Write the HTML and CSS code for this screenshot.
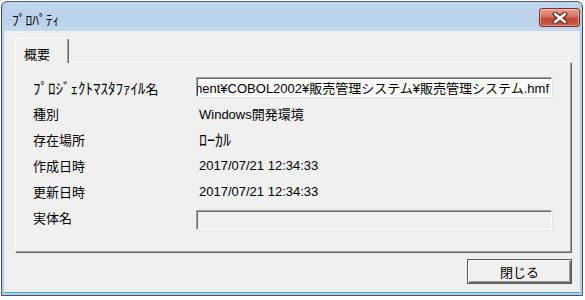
FILE: index.html
```html
<!DOCTYPE html>
<html lang="ja">
<head>
  <meta charset="UTF-8" />
  <title>ﾌﾟﾛﾊﾟﾃｨ</title>
  <link rel="stylesheet" href="styles.css">
</head>
<body>
  <div class="window">
    <div class="titlebar">
      <span class="title">ﾌﾟﾛﾊﾟﾃｨ</span>
      <button class="close-btn">
        <svg width="16" height="12" viewBox="0 0 16 12">
          <path d="M3 2 L13 10 M13 2 L3 10" stroke="#7a2418" stroke-width="5" stroke-linecap="round" />
          <path d="M3 2 L13 10 M13 2 L3 10" stroke="#ffffff" stroke-width="2.6" stroke-linecap="round" />
        </svg>
      </button>
    </div>

    <div class="client">
      <div class="tabs">
        <div class="tab active">概要</div>
      </div>

      <div class="tab-panel">
        <div class="props">
          <div class="label"><span class="kana">ﾌﾟﾛｼﾞｪｸﾄﾏｽﾀﾌｧｲﾙ</span>名</div>
          <div class="textbox"><span>ment¥COBOL2002¥販売管理システム¥販売管理システム.hmf</span></div>

          <div class="label">種別</div>
          <div class="value">Windows開発環境</div>

          <div class="label">存在場所</div>
          <div class="value"><span class="kana wide">ﾛｰｶﾙ</span></div>

          <div class="label">作成日時</div>
          <div class="value">2017/07/21 12:34:33</div>

          <div class="label">更新日時</div>
          <div class="value">2017/07/21 12:34:33</div>

          <div class="label">実体名</div>
          <div class="textbox disabled"></div>
        </div>
      </div>

      <div class="actions">
        <button class="btn">閉じる</button>
      </div>
    </div>
  </div>
</body>
</html>
```

FILE: styles.css
```css
* { box-sizing: border-box; }

body {
  margin: 0;
  background: #ffffff;
  font-family: "Liberation Sans", "Noto Sans CJK JP", sans-serif;
  font-size: 13px;
  color: #000;
}

.window {
  margin: 1px 0 0 1px;
  width: 582px;
  height: 295px;
  border: 1px solid #4f5660;
  border-radius: 6px 6px 0 0;
  background: #b4cfeb;
  display: flex;
  flex-direction: column;
  padding: 0 2px 2px 2px;
}

.titlebar {
  height: 29px;
  flex: none;
  display: flex;
  align-items: flex-start;
  justify-content: space-between;
  padding: 0 0 0 8px;
  background: linear-gradient(#c2d7ee, #b9d1ea 60%, #c4d9ee);
  border-radius: 5px 5px 0 0;
}

.title {
  margin-top: 7px;
  font-size: 13.5px;
}

.close-btn {
  margin-top: 6px;
  width: 41px;
  height: 19px;
  padding: 0;
  border: 1px solid #7d2a20;
  border-radius: 3px;
  background: linear-gradient(#e6a293, #d3705f 45%, #c24a36 55%, #c75a42);
  box-shadow: inset 0 0 0 1px rgba(255, 220, 210, 0.5);
  display: flex;
  align-items: center;
  justify-content: center;
}

.client {
  flex: 1;
  background: #f0f0f0;
  border-bottom: 1px solid #4aa8dc;
  padding: 7px 8px 8px 11px;
  display: flex;
  flex-direction: column;
}

.tabs {
  display: flex;
}

.tab {
  width: 54px;
  height: 25px;
  margin-bottom: -1px;
  position: relative;
  padding: 5px 0 0 8px;
  font-size: 13px;
  background: #f0f0f0;
  border-top: 1px solid #ffffff;
  border-left: 1px solid #ffffff;
  border-right: 1px solid #696969;
  border-radius: 2px 2px 0 0;
  box-shadow: inset -1px 0 #a0a0a0;
}

.tab-panel {
  height: 191px;
  border-top: 1px solid #ffffff;
  border-left: 1px solid #ffffff;
  border-right: 1px solid #696969;
  border-bottom: 1px solid #696969;
  box-shadow: inset -1px -1px #a0a0a0;
  padding: 14px 19px 0 17px;
}

.props {
  display: grid;
  grid-template-columns: 163px 1fr;
  grid-auto-rows: 20px;
  row-gap: 6px;
  align-items: center;
}

.label {
  font-size: 13px;
  white-space: nowrap;
}

/* half-width katakana is drawn wider in the original UI font */
.kana {
  font-size: 15px;
}

.kana.wide {
  font-size: 16px;
}

.value {
  padding-left: 3px;
  white-space: nowrap;
}

.textbox {
  height: 20px;
  border: 1px solid;
  border-color: #a0a0a0 #ffffff #ffffff #a0a0a0;
  box-shadow: inset 1px 1px #696969, 1px 1px #e3e3e3;
  background: #fbfbfb;
  display: flex;
  align-items: center;
  justify-content: flex-end;
  overflow: hidden;
  white-space: nowrap;
  padding: 0 2px 0 1px;
}

.textbox.disabled {
  background: #f0f0f0;
  margin-top: 6px;
}

.actions {
  display: flex;
  justify-content: flex-end;
  margin-top: 6px;
}

.btn {
  width: 105px;
  height: 25px;
  font-family: "Liberation Sans", "Noto Sans CJK JP", sans-serif;
  font-size: 13px;
  background: #f0f0f0;
  border: 1px solid #5a5a5a;
  box-shadow: inset 1px 1px #ffffff, inset -1px -1px #696969, inset -2px -2px #a0a0a0;
  padding: 0;
}
```
